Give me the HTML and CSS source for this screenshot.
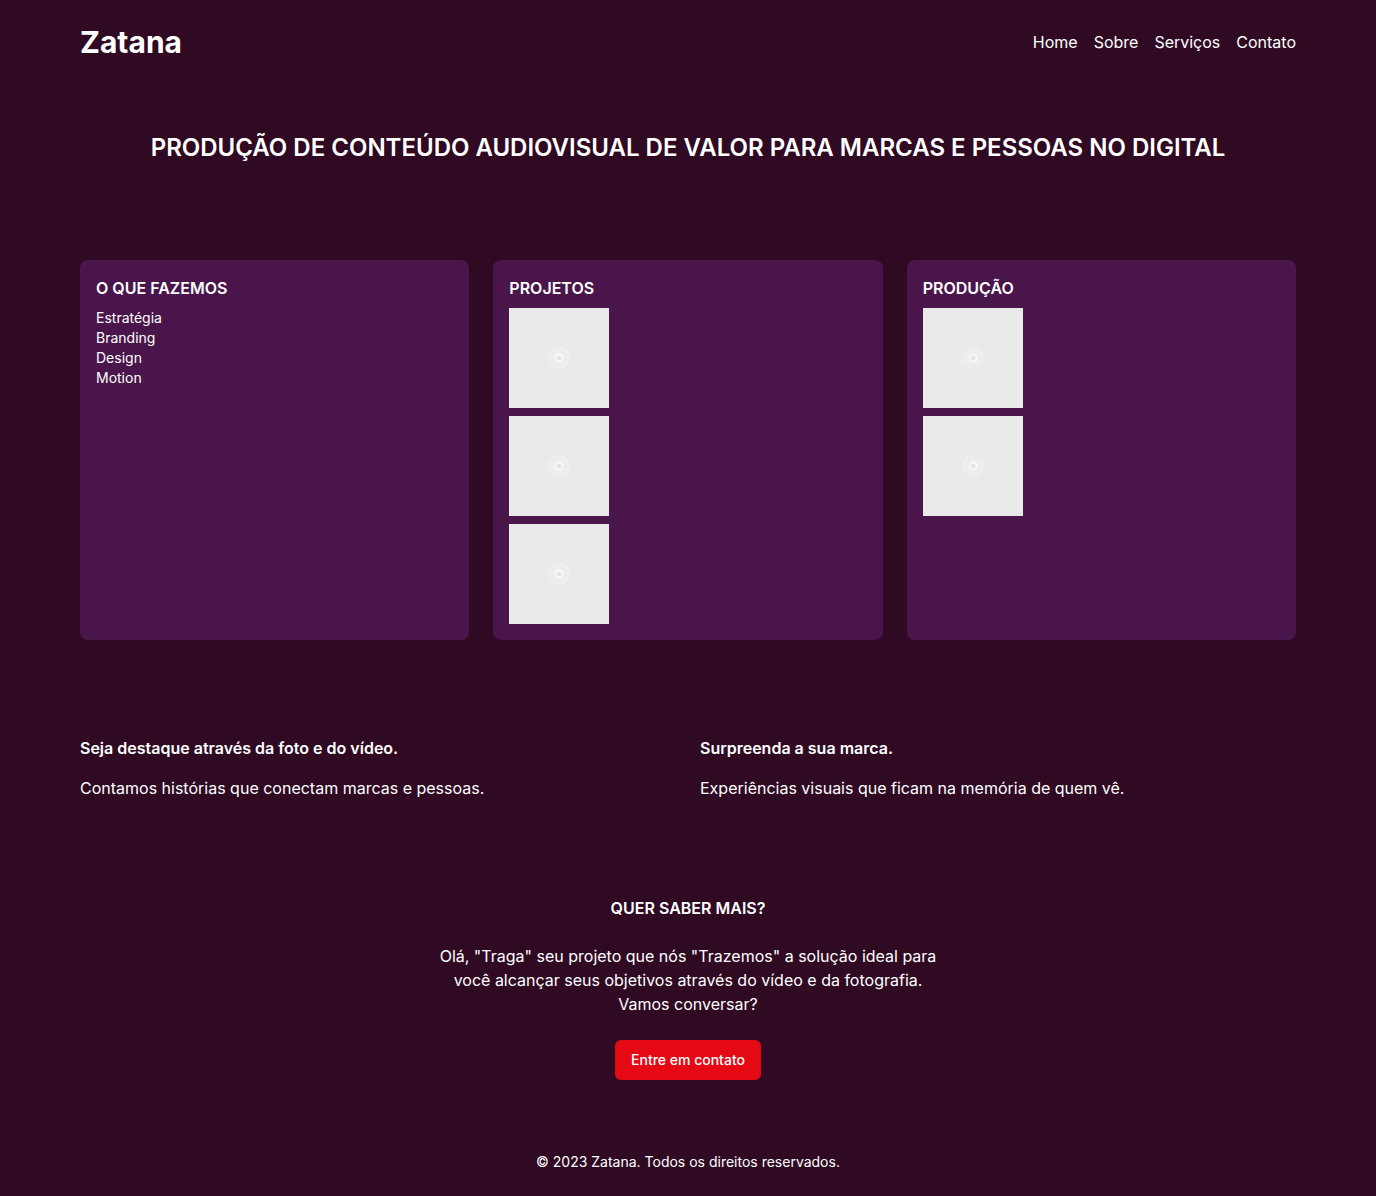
FILE: index.html
```html
<!DOCTYPE html>
<html lang="pt-BR">
<head>
  <meta charset="utf-8">
  <meta name="viewport" content="width=device-width, initial-scale=1">
  <title>Zatana</title>
  <link rel="stylesheet" href="styles.css">
</head>
<body>
  <svg class="sprite" aria-hidden="true">
    <symbol id="disc" viewBox="0 0 100 100">
      <circle cx="50" cy="50" r="10" fill="#eeeeee"/>
      <circle cx="50" cy="50" r="10" fill="none" stroke="#eeeeee" stroke-width="3" stroke-dasharray="5 2.85"/>
      <circle cx="50" cy="50" r="7" fill="none" stroke="#ebebeb" stroke-dasharray="3 2.5"/>
      <circle cx="50" cy="50" r="3.5" fill="#e6e6e6" stroke="#f8f8f8" stroke-width="2"/>
    </symbol>
  </svg>

  <header class="header">
    <h1 class="brand">Zatana</h1>
    <nav class="nav">
      <a href="#home">Home</a>
      <a href="#sobre">Sobre</a>
      <a href="#servicos">Serviços</a>
      <a href="#contato">Contato</a>
    </nav>
  </header>

  <main>
    <section class="section hero" id="home">
      <h2 class="hero-title">PRODUÇÃO DE CONTEÚDO AUDIOVISUAL DE VALOR PARA MARCAS E PESSOAS NO DIGITAL</h2>
    </section>

    <section class="section cards" id="servicos">
      <article class="card">
        <h3>O QUE FAZEMOS</h3>
        <ul class="list">
          <li>Estratégia</li>
          <li>Branding</li>
          <li>Design</li>
          <li>Motion</li>
        </ul>
      </article>
      <article class="card">
        <h3>PROJETOS</h3>
        <div class="thumbs">
          <svg class="thumb" role="img" aria-label="Projeto 1"><use href="#disc"/></svg>
          <svg class="thumb" role="img" aria-label="Projeto 2"><use href="#disc"/></svg>
          <svg class="thumb" role="img" aria-label="Projeto 3"><use href="#disc"/></svg>
        </div>
      </article>
      <article class="card">
        <h3>PRODUÇÃO</h3>
        <div class="thumbs">
          <svg class="thumb" role="img" aria-label="Produção 1"><use href="#disc"/></svg>
          <svg class="thumb" role="img" aria-label="Produção 2"><use href="#disc"/></svg>
        </div>
      </article>
    </section>

    <section class="section features" id="sobre">
      <div class="feature">
        <h3>Seja destaque através da foto e do vídeo.</h3>
        <p>Contamos histórias que conectam marcas e pessoas.</p>
      </div>
      <div class="feature">
        <h3>Surpreenda a sua marca.</h3>
        <p>Experiências visuais que ficam na memória de quem vê.</p>
      </div>
    </section>

    <section class="section contact" id="contato">
      <h3>QUER SABER MAIS?</h3>
      <p class="contact-text">Olá, "Traga" seu projeto que nós "Trazemos" a solução ideal para você alcançar seus objetivos através do vídeo e da fotografia. Vamos conversar?</p>
      <button class="button" type="button">Entre em contato</button>
    </section>
  </main>

  <footer class="footer">
    <p>© 2023 Zatana. Todos os direitos reservados.</p>
  </footer>
</body>
</html>
```
FILE: styles.css
```css
* {
  box-sizing: border-box;
  margin: 0;
  padding: 0;
}

body {
  background: #2f0a22;
  color: #ffffff;
  font-family: Inter, "Liberation Sans", sans-serif;
  font-size: 16px;
  line-height: 24px;
}

h3 {
  font-size: 16px;
  font-weight: 600;
}

.sprite {
  display: none;
}

.header {
  display: flex;
  align-items: center;
  justify-content: space-between;
  padding: 24px 80px;
}

.brand {
  font-size: 30px;
  font-weight: 700;
  line-height: 36px;
}

.nav {
  display: flex;
  gap: 16px;
}

.nav a {
  color: inherit;
  text-decoration: none;
}

.section {
  padding: 48px 80px;
}

.hero {
  text-align: center;
}

.hero-title {
  font-size: 24px;
  font-weight: 600;
  line-height: 32px;
}

.cards {
  display: grid;
  grid-template-columns: repeat(3, 1fr);
  gap: 24px;
}

.card {
  display: flex;
  flex-direction: column;
  gap: 8px;
  padding: 16px;
  border-radius: 8px;
  background: #4a154b;
}

.list {
  list-style: none;
  font-size: 14px;
  line-height: 20px;
}

.thumbs {
  display: flex;
  flex-direction: column;
  gap: 8px;
}

.thumb {
  width: 100px;
  height: 100px;
  background: #eaeaea;
}

.features {
  display: grid;
  grid-template-columns: repeat(2, 1fr);
  gap: 24px;
}

.feature {
  display: flex;
  flex-direction: column;
  gap: 16px;
}

.contact {
  display: flex;
  flex-direction: column;
  align-items: center;
  gap: 24px;
  text-align: center;
}

.contact-text {
  max-width: 512px;
}

.button {
  height: 40px;
  padding: 0 16px;
  border: 0;
  border-radius: 6px;
  background: #e50914;
  color: inherit;
  font: 500 14px/20px Inter, "Liberation Sans", sans-serif;
  cursor: pointer;
}

.footer {
  padding: 24px 80px;
  font-size: 14px;
  line-height: 20px;
  text-align: center;
}

@media (max-width: 768px) {
  .header,
  .section,
  .footer {
    padding-inline: 24px;
  }

  .header {
    flex-wrap: wrap;
    gap: 16px;
  }

  .cards,
  .features {
    grid-template-columns: 1fr;
  }
}
```
